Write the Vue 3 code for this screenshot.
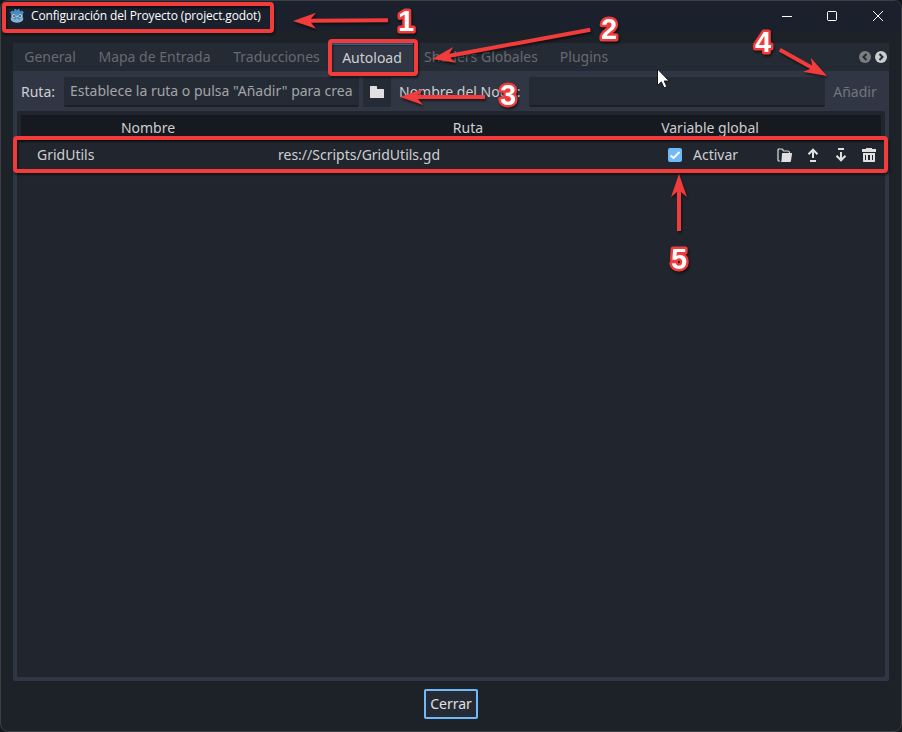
<script setup>
const tabs = [
  { name: 'General', width: 74 },
  { name: 'Mapa de Entrada', width: 135 },
  { name: 'Traducciones', width: 109 },
  { name: 'Autoload', width: 82, active: true },
  { name: 'Shaders Globales', width: 136 },
  { name: 'Plugins', width: 70 },
]
const columns = ['Nombre', 'Ruta', 'Variable global', '']
const frames = [
  { x: 4, y: 4, width: 268, height: 27 },
  { x: 330, y: 41, width: 86, height: 33 },
  { x: 15, y: 138, width: 871, height: 33 },
]
const arrows = [
  { x: 293, y: 21, angle: 179.5, length: 95 },
  { x: 432, y: 59, angle: 169.5, length: 161 },
  { x: 400, y: 97, angle: 180, length: 85 },
  { x: 827, y: 76, angle: 29, length: 54 },
  { x: 679, y: 174, angle: -90, length: 57 },
]
const numbers = [
  { n: 1, x: 406, y: 31 },
  { n: 2, x: 609, y: 39 },
  { n: 3, x: 508, y: 104.500 },
  { n: 4, x: 763, y: 52 },
  { n: 5, x: 679, y: 269 },
]
</script>

<template>
  <main class="desktop">
    <section class="window">
      <header class="titlebar">
        <svg class="logo" width="16" height="16" viewBox="0 0 16 16">
          <path d="M2 5.500 1 4.500 3 2.500 5 3.500 5.500 1h1.500l1 1.500L9 1h1.500L11 3.500l2-1 2 2-1 1v5.500c0 5-12 5-12 0z" fill="#478cbf" />
          <path d="M1.700 9.500l2.500.5.5 1.500h2l.5-1h1.600l.5 1h2l.5-1.500 2.500-.5v1.500c0 4.500-12.600 4.500-12.600 0z" fill="#b7d4e9" opacity=".55" />
          <circle cx="4.800" cy="8" r="1.700" fill="#e2edf5" /><circle cx="11.200" cy="8" r="1.700" fill="#e2edf5" />
          <circle cx="5" cy="8.100" r="1" fill="#414042" /><circle cx="11" cy="8.100" r="1" fill="#414042" />
          <path d="M8 7.500v2" stroke="#e2edf5" />
        </svg>
        <h1>Configuración del Proyecto (project.godot)</h1>
        <svg class="controls" width="106" height="12" viewBox="0 0 106 12" fill="none" stroke="#fff">
          <path d="M0 6.500h10M91 1l10 10M101 1L91 11" />
          <rect x="45.500" y="1.500" width="9" height="9" rx="1" />
        </svg>
      </header>

      <div class="settings">
        <nav class="tabs">
          <div v-for="tab in tabs" :key="tab.name" class="tab" :class="{ active: tab.active }" :style="{ width: tab.width + 'px' }">{{ tab.name }}</div>
          <svg class="pager" width="28" height="14" viewBox="0 0 28 14">
            <circle cx="6" cy="7" r="6" fill="#7b7d81" /><circle cx="22" cy="7" r="6" fill="#cccdce" />
            <path d="M7.500 4l-3 3 3 3M20.500 4l3 3-3 3" fill="none" stroke="#252b34" stroke-width="2" />
          </svg>
        </nav>

        <div class="form">
          <label class="path-label">Ruta:</label>
          <div class="field path-field">Establece la ruta o pulsa "Añadir" para crea</div>
          <button class="browse">
            <svg width="14" height="12" viewBox="0 0 14 12"><path d="M1 0h5c1 0 1 0 1 1v1c0 1 0 1 1 1h5c1 0 1 0 1 1v7c0 1 0 1-1 1H1c-1 0-1 0-1-1V1c0-1 0-1 1-1z" fill="#e0e0e0" /></svg>
          </button>
          <label class="name-label">Nombre del Nodo:</label>
          <div class="field name-field"></div>
          <button class="add">Añadir</button>
        </div>

        <div class="tree">
          <div class="row head"><div v-for="c in columns" :key="c" class="cell">{{ c }}</div></div>
          <div class="row item">
            <div class="cell">GridUtils</div>
            <div class="cell">res://Scripts/GridUtils.gd</div>
            <div class="cell toggle">
              <svg width="14" height="14" viewBox="0 0 14 14"><rect width="14" height="14" rx="2" fill="#70bafa" /><path d="M2.500 7.500l3 2.500 6-6" fill="none" stroke="#fff" stroke-width="2" /></svg>
              <span>Activar</span>
            </div>
            <div class="cell actions">
              <svg width="16" height="16" viewBox="0 0 16 16"><path d="M3 14H2c-.6 0-1-.4-1-1V3c0-.6.4-1 1-1h3c1 0 1 .2 1 1s.2 1 1 1h4c1 0 1.500.5 1.500 2" fill="none" stroke="#e0e0e0" stroke-width="1.200" /><path d="M6 6h8c1 0 1 .3 1 1l-1 6.500c-.2 1-.5 1.500-1.500 1.500H3c1 0 1.300-.5 1.500-1.500L5 7c.1-.7.300-1 1-1z" fill="#e0e0e0" /></svg>
              <svg width="16" height="16" viewBox="0 0 16 16" fill="none" stroke="#e0e0e0" stroke-width="2"><path d="M8 11V3M3.500 7.200L8 2.700l4.500 4.500M5 14h6" /></svg>
              <svg width="16" height="16" viewBox="0 0 16 16" fill="none" stroke="#e0e0e0" stroke-width="2"><path d="M8 5v8M3.500 8.800L8 13.300l4.500-4.500M5 2h6" /></svg>
              <svg width="16" height="16" viewBox="0 0 16 16" fill="#e0e0e0"><path fill-rule="evenodd" d="M5 1h6v1h4v3H1V2h4zM2 6h12v8c0 1-.5 1-1 1H3c-.5 0-1 0-1-1zm2 2v5h1V8zm3 0v5h2V8zm4 0v5h1V8z" /></svg>
            </div>
          </div>
        </div>
      </div>
      <footer><button class="close">Cerrar</button></footer>
    </section>

    <svg class="annotations" width="902" height="732" viewBox="0 0 902 732">
      <g class="marks">
        <rect v-for="(f, i) in frames" :key="i" v-bind="f" rx="2" fill="none" stroke="#f23b3b" stroke-width="4" />
        <g v-for="(a, i) in arrows" :key="'a' + i" :transform="`translate(${a.x} ${a.y}) rotate(${a.angle})`">
          <path :d="`M0 0L-23-8-18-2H-${a.length}V2H-18L-23 8z`" fill="#f23b3b" />
        </g>
        <text v-for="d in numbers" :key="d.n" :x="d.x" :y="d.y">{{ d.n }}</text>
      </g>
      <path class="cursor" d="M657.500 69v16.500l3.800-3.600 2.800 6 2.800-1.300-2.700-5.600h5z" />
    </svg>
  </main>
</template>

<style>
body { background: #16191d; }
</style>
<style scoped>
* { box-sizing: border-box; }
.desktop { position: relative; width: 902px; height: 732px; overflow: hidden; font: 14px/20px "Noto Sans", sans-serif; color: #cdcfd2; }
.window { height: 732px; display: flex; flex-direction: column; border: 1px solid #3c3e41; border-radius: 8px; background: #1d2229; overflow: hidden; }
.titlebar { height: 30px; display: flex; align-items: center; padding-left: 8px; background: #1a202c; }
.logo { margin-right: 6px; }
h1 { margin: 0; font: 12px/16px "Open Sans", sans-serif; color: #fff; letter-spacing: -.15px; }
.controls { margin: -1px 13px 0 auto; }
.settings { margin: 12px 12px 0; height: 638px; background: #303643; border-radius: 2px; display: flex; flex-direction: column; }
.tabs { display: flex; height: 28px; background: #252b34; border-radius: 2px 2px 0 0; }
.tab { height: 28px; line-height: 28px; text-align: center; white-space: nowrap; color: #656a72; }
.tab.active { background: #303643; color: #cdcfd2; border-top: 2px solid #5a95c8; line-height: 25px; }
.pager { margin: 7px 2px 0 auto; }
.form { height: 30px; margin: 6px 4px 4px; display: flex; }
.form label { line-height: 30px; white-space: nowrap; }
.path-label { width: 47px; padding-left: 4px; }
.field { height: 30px; border-bottom: 2px solid #1b2027; background: #252b34; padding-left: 6px; line-height: 28px; white-space: nowrap; color: #a1a4a8; border-radius: 2px; overflow: hidden; }
.path-field { width: 295px; }
button { font: inherit; border: 0; margin: 0; padding: 0; }
.browse { width: 28px; margin-left: 4px; background: #252b34; display: grid; place-items: center; border-radius: 2px; }
.name-label { width: 138px; padding-left: 8px; }
.name-field { width: 296px; }
.add { flex: 1; background: none; color: #72767e; line-height: 30px; padding-right: 0; }
.tree { flex: 1; margin: 0 4px 4px; padding: 4px; background: #21262e; border-radius: 2px; }
.row { display: grid; grid-template-columns: 247px 393px 106px 114px; }
.head { height: 26px; background: #16191f; text-align: center; line-height: 26px; }
.head .cell { padding-left: 7px; }
.head .cell:nth-child(3) { padding-left: 0; margin-left: -8px; }
.item { height: 28px; line-height: 28px; }
.item .cell:first-child { padding-left: 16px; }
.item .cell:nth-child(2) { padding-left: 10px; }
.toggle { display: flex; align-items: center; gap: 11px; padding-left: 7px; }
.actions { display: flex; align-items: center; gap: 12px; padding-left: 10px; }
footer { flex: 1; display: flex; justify-content: center; align-items: flex-start; padding-top: 8px; }
.close { width: 54px; height: 30px; border: 2px solid #70bafa; border-radius: 2px; background: #252b34; color: #e0e0e0; }
.annotations { position: absolute; left: 0; top: 0; }
.marks { filter: drop-shadow(1px 2px 1px rgba(0, 0, 0, .55)); }
.marks text { font: bold 29px "Liberation Sans", sans-serif; text-anchor: middle; fill: #fff; stroke: #f23b3b; stroke-width: 5px; paint-order: stroke; stroke-linejoin: round; }
.cursor { fill: #fff; stroke: #11151c; stroke-width: 1px; }
</style>
